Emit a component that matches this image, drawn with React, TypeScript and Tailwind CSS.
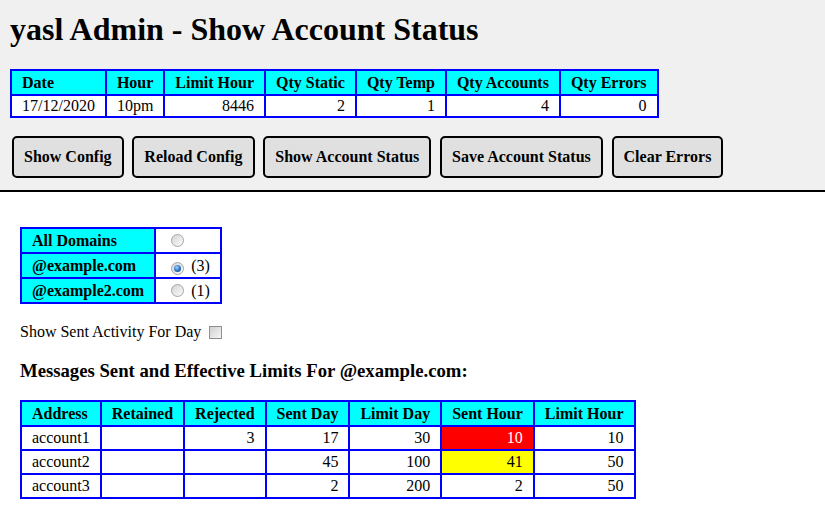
import React from "react";

const th =
  "border-2 border-[#0000ff] bg-[#00ffff] px-[10px] py-[2px] text-left font-bold leading-[19px]";
const tdTop = "border-2 border-[#0000ff] bg-white px-[10px] py-[1px] leading-[18px]";
const tdBot = "border-2 border-[#0000ff] bg-white px-[10px] py-[2px] leading-[18px]";
const btn =
  "rounded-[5px] border-2 border-black bg-[#e0e0e0] px-[10px] py-[10px] font-bold leading-[18px] text-black";
const dth =
  "border-2 border-[#0000ff] bg-[#00ffff] px-[10px] py-[2.5px] text-left font-bold leading-[18px]";
const dtd = "border-2 border-[#0000ff] bg-white py-[2.5px] pl-[10px] pr-[10px] leading-[18px]";

function Radio({ checked }: { checked?: boolean }) {
  return (
    <span className="relative ml-[5px] mr-[3px] inline-flex h-[13px] w-[13px] items-center justify-center rounded-full border border-[#a6a6a6] bg-[linear-gradient(135deg,#d4d4d4,#fbfbfb)] align-[-1px]">
      {checked && (
        <span className="h-[7px] w-[7px] rounded-full bg-[radial-gradient(circle_at_40%_35%,#9fd3ff,#2a72c0_55%,#0c3566)]" />
      )}
    </span>
  );
}

export default function App() {
  const font = { fontFamily: '"Liberation Serif", "Times New Roman", serif' };
  return (
    <div className="min-h-screen bg-white text-[16px] text-black" style={font}>
      <div className="border-b-2 border-black bg-[#f0f0f0] px-[10px] pb-[12px] pt-[11px]">
        <h1 className="text-[32px] font-bold leading-[37px]">yasl Admin - Show Account Status</h1>
        <table className="mt-[21px] border-collapse border-2 border-[#0000ff]">
          <thead>
            <tr>
              <th className={th}>Date</th>
              <th className={th}>Hour</th>
              <th className={th}>Limit Hour</th>
              <th className={th}>Qty Static</th>
              <th className={th}>Qty Temp</th>
              <th className={th}>Qty Accounts</th>
              <th className={th}>Qty Errors</th>
            </tr>
          </thead>
          <tbody>
            <tr>
              <td className={tdTop}>17/12/2020</td>
              <td className={tdTop}>10pm</td>
              <td className={tdTop + " text-right"}>8446</td>
              <td className={tdTop + " text-right"}>2</td>
              <td className={tdTop + " text-right"}>1</td>
              <td className={tdTop + " text-right"}>4</td>
              <td className={tdTop + " text-right"}>0</td>
            </tr>
          </tbody>
        </table>
        <div className="ml-[2px] mt-[18px] flex gap-[8.75px]">
          <button className={btn}>Show Config</button>
          <button className={btn}>Reload Config</button>
          <button className={btn}>Show Account Status</button>
          <button className={btn}>Save Account Status</button>
          <button className={btn}>Clear Errors</button>
        </div>
      </div>

      <div className="px-[20px]">
        <table className="mt-[35px] border-collapse border-2 border-[#0000ff]">
          <tbody>
            <tr>
              <th className={dth}>All Domains</th>
              <td className={dtd}>
                <Radio />
              </td>
            </tr>
            <tr>
              <th className={dth}>@example.com</th>
              <td className={dtd}>
                <Radio checked /> (3)
              </td>
            </tr>
            <tr>
              <th className={dth}>@example2.com</th>
              <td className={dtd}>
                <Radio /> (1)
              </td>
            </tr>
          </tbody>
        </table>

        <div className="mt-[19px] flex items-center leading-[18px]">
          <span>Show Sent Activity For Day</span>
          <span className="ml-[8px] inline-block h-[13px] w-[13px] border border-[#8e8e8e] bg-[linear-gradient(135deg,#d0d0d0,#f6f6f6)]" />
        </div>

        <h3 className="mt-[19px] text-[18.72px] font-bold leading-[21.5px]">
          Messages Sent and Effective Limits For @example.com:
        </h3>

        <table className="mt-[18px] border-collapse border-2 border-[#0000ff]">
          <thead>
            <tr>
              <th className={th}>Address</th>
              <th className={th}>Retained</th>
              <th className={th}>Rejected</th>
              <th className={th}>Sent Day</th>
              <th className={th}>Limit Day</th>
              <th className={th}>Sent Hour</th>
              <th className={th}>Limit Hour</th>
            </tr>
          </thead>
          <tbody>
            <tr>
              <td className={tdBot}>account1</td>
              <td className={tdBot}></td>
              <td className={tdBot + " text-right"}>3</td>
              <td className={tdBot + " text-right"}>17</td>
              <td className={tdBot + " text-right"}>30</td>
              <td className="border-2 border-[#0000ff] bg-[#ff0000] px-[10px] py-[2px] text-right leading-[18px] text-white">10</td>
              <td className={tdBot + " text-right"}>10</td>
            </tr>
            <tr>
              <td className={tdBot}>account2</td>
              <td className={tdBot}></td>
              <td className={tdBot}></td>
              <td className={tdBot + " text-right"}>45</td>
              <td className={tdBot + " text-right"}>100</td>
              <td className="border-2 border-[#0000ff] bg-[#ffff00] px-[10px] py-[2px] text-right leading-[18px]">41</td>
              <td className={tdBot + " text-right"}>50</td>
            </tr>
            <tr>
              <td className={tdBot}>account3</td>
              <td className={tdBot}></td>
              <td className={tdBot}></td>
              <td className={tdBot + " text-right"}>2</td>
              <td className={tdBot + " text-right"}>200</td>
              <td className={tdBot + " text-right"}>2</td>
              <td className={tdBot + " text-right"}>50</td>
            </tr>
          </tbody>
        </table>
      </div>
    </div>
  );
}
